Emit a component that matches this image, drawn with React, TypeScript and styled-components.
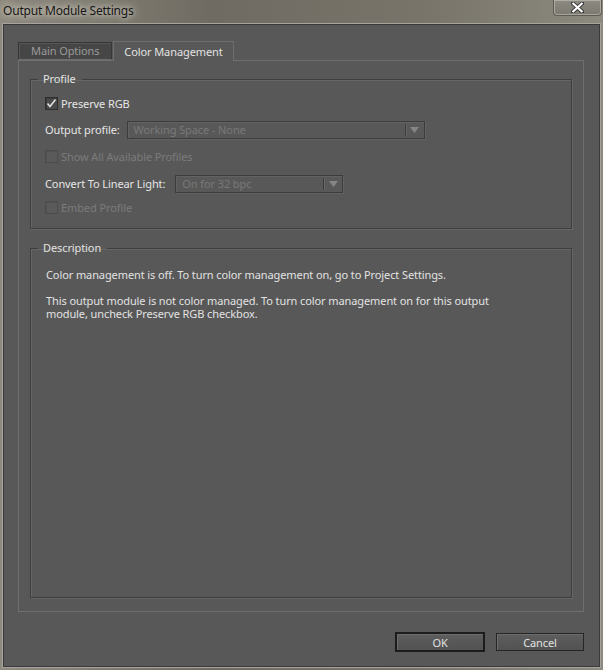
import React from 'react'
import styled, { createGlobalStyle } from 'styled-components'

const GlobalStyle = createGlobalStyle`
    html, body {
        margin: 0;
        padding: 0;
        background: #7a766c;
    }
    * {
        box-sizing: border-box;
    }
`

const UI_FONT = `"Noto Sans", "Open Sans", "Liberation Sans", sans-serif`

const Window = styled.div`
    width: 603px;
    height: 670px;
    display: flex;
    flex-direction: column;
    background: linear-gradient(90deg, #8f8a7e 0%, #6f6b62 35%, #78746a 70%, #8c897f 100%);
    font-family: ${UI_FONT};
    font-size: 11px;
    letter-spacing: -0.1px;
`

const TitleBar = styled.div`
    height: 23px;
    display: flex;
    justify-content: space-between;
    align-items: flex-start;
    flex-shrink: 0;
`

const Title = styled.div`
    padding: 2px 0 0 3px;
    font-size: 12px;
    letter-spacing: -0.2px;
    color: #161616;
    text-shadow: 0 0 6px rgba(235, 232, 220, 0.9), 0 0 10px rgba(235, 232, 220, 0.7);
`

const CloseButton = styled.div`
    width: 49px;
    height: 16px;
    margin-right: 1px;
    border: 1px solid #5e5b54;
    border-top: none;
    border-radius: 0 0 4px 4px;
    box-shadow: inset 0 0 0 1px rgba(220, 218, 210, 0.45);
    background: linear-gradient(180deg, #8d8a81, #7c7970);
    display: flex;
    align-items: center;
    justify-content: center;
`

const Body = styled.div`
    flex: 1;
    margin: 0 2px 2px 2px;
    border: 1px solid #a6a49e;
    box-shadow: inset 0 0 0 1px #3a3a3a;
    background: #585858;
    display: flex;
    flex-direction: column;
    padding: 17px 16px 15px 15px;
`

const TabRow = styled.div`
    display: flex;
    align-items: flex-end;
    height: 19px;
`

const Tab = styled.div<{ $active?: boolean }>`
    height: ${({ $active }) => ($active ? '20px' : '18px')};
    margin-bottom: ${({ $active }) => ($active ? '-1px' : '0')};
    padding: 0 ${({ $active }) => ($active ? '10px' : '12px')} 1px;
    margin-left: ${({ $active }) => ($active ? '1px' : '0')};
    display: flex;
    align-items: center;
    color: ${({ $active }) => ($active ? '#e2e2e2' : '#9a9a9a')};
    background: ${({ $active }) => ($active ? '#585858' : '#464646')};
    border: 1px solid ${({ $active }) => ($active ? '#6e6e6e' : '#363636')};
    border-bottom: ${({ $active }) => ($active ? 'none' : '1px solid #6e6e6e')};
    box-shadow: ${({ $active }) =>
        $active ? 'none' : 'inset 1px 1px 0 #565656'};
    position: relative;
    z-index: ${({ $active }) => ($active ? 1 : 0)};
`

const TabPanel = styled.div`
    flex: 1;
    border: 1px solid #6e6e6e;
    padding: 11px 11px 13px 11px;
    display: flex;
    flex-direction: column;
    gap: 12px;
`

const Group = styled.fieldset<{ $grow?: boolean }>`
    margin: 0;
    padding: 0 14px;
    border: 1px solid #3e3e3e;
    box-shadow: inset 1px 1px 0 #666666, 1px 1px 0 #666666;
    min-width: 0;
    flex: ${({ $grow }) => ($grow ? 1 : 'none')};
    height: ${({ $grow }) => ($grow ? 'auto' : '157px')};
`

const Legend = styled.legend`
    padding: 0 6px 0 5px;
    margin-left: -7px;
    color: #e2e2e2;
    font-size: 11px;
    line-height: 14px;
`

const Rows = styled.div`
    display: flex;
    flex-direction: column;
    padding-top: 5px;
`

const Row = styled.div<{ $h: number }>`
    height: ${({ $h }) => $h}px;
    display: flex;
    align-items: center;
`

const CheckBox = styled.div<{ $disabled?: boolean }>`
    width: 13px;
    height: 13px;
    flex-shrink: 0;
    border: 1px solid ${({ $disabled }) => ($disabled ? '#4c4c4c' : '#2e2e2e')};
    background: ${({ $disabled }) => ($disabled ? '#5a5a5a' : '#4a4a4a')};
    box-shadow: inset 1px 1px 0 ${({ $disabled }) => ($disabled ? '#525252' : '#3c3c3c')};
    display: flex;
    align-items: center;
    justify-content: center;
    margin-right: 3px;
`

const Label = styled.span<{ $disabled?: boolean }>`
    color: ${({ $disabled }) => ($disabled ? '#7b7b7b' : '#e6e6e6')};
    white-space: nowrap;
`

const Select = styled.div<{ $width: number; $gap: number }>`
    width: ${({ $width }) => $width}px;
    height: 18px;
    margin-left: ${({ $gap }) => $gap}px;
    border: 1px solid #3c3c3c;
    box-shadow: inset 1px 1px 0 #626262, 1px 1px 0 #626262;
    display: flex;
    align-items: center;
    color: #787878;
`

const SelectText = styled.span`
    flex: 1;
    padding-left: 6px;
    white-space: nowrap;
`

const SelectArrow = styled.div`
    width: 19px;
    display: flex;
    align-items: center;
    justify-content: center;
    border-left: 1px solid #3c3c3c;
    box-shadow: inset 1px 0 0 #666666;
    margin: 2px 0;
    height: 12px;
`

const Description = styled.div`
    padding: 13px 0 0 1px;
    color: #e2e2e2;
    line-height: 13px;
    display: flex;
    flex-direction: column;
    gap: 13px;
`

const Para = styled.p`
    margin: 0;
    max-width: 470px;
`

const Footer = styled.div`
    display: flex;
    justify-content: flex-end;
    gap: 11px;
    padding-top: 20px;
`

const Button = styled.div<{ $default?: boolean }>`
    width: ${({ $default }) => ($default ? '90px' : '88px')};
    height: ${({ $default }) => ($default ? '20px' : '18px')};
    margin-top: ${({ $default }) => ($default ? '0' : '1px')};
    border: ${({ $default }) => ($default ? '2px solid #1c1c1c' : '1px solid #262626')};
    background: linear-gradient(180deg, #5e5e5e, #525252);
    box-shadow: inset 1px 1px 0 #6c6c6c;
    color: #e2e2e2;
    font-size: 11px;
    display: flex;
    align-items: center;
    justify-content: center;
`

const CheckMark = () => (
    <svg width="11" height="11" viewBox="0 0 11 11">
        <path d="M1.5 5.5 L4 8.5 L9.5 1.5" fill="none" stroke="#e0e0e0" strokeWidth="1.6" />
    </svg>
)

const DownArrow = () => (
    <svg width="9" height="6" viewBox="0 0 9 6">
        <path d="M0 0 H9 L4.5 6 Z" fill="#858585" />
    </svg>
)

const CloseGlyph = () => (
    <svg width="13" height="11" viewBox="0 0 13 11">
        <path
            d="M1.5 1 L11.5 10 M11.5 1 L1.5 10"
            stroke="#3a3a3a"
            strokeWidth="4"
            strokeLinecap="round"
        />
        <path d="M1.5 1 L11.5 10 M11.5 1 L1.5 10" stroke="#ffffff" strokeWidth="2.2" />
    </svg>
)

const App = () => (
    <>
        <GlobalStyle />
        <Window>
            <TitleBar>
                <Title>Output Module Settings</Title>
                <CloseButton>
                    <CloseGlyph />
                </CloseButton>
            </TitleBar>
            <Body>
                <TabRow>
                    <Tab>Main Options</Tab>
                    <Tab $active>Color Management</Tab>
                </TabRow>
                <TabPanel>
                    <Group>
                        <Legend>Profile</Legend>
                        <Rows>
                            <Row $h={25}>
                                <CheckBox>
                                    <CheckMark />
                                </CheckBox>
                                <Label>Preserve RGB</Label>
                            </Row>
                            <Row $h={27}>
                                <Label>Output profile:</Label>
                                <Select $width={298} $gap={7}>
                                    <SelectText>Working Space - None</SelectText>
                                    <SelectArrow>
                                        <DownArrow />
                                    </SelectArrow>
                                </Select>
                            </Row>
                            <Row $h={27}>
                                <CheckBox $disabled />
                                <Label $disabled>Show All Available Profiles</Label>
                            </Row>
                            <Row $h={27}>
                                <Label>Convert To Linear Light:</Label>
                                <Select $width={168} $gap={10}>
                                    <SelectText>On for 32 bpc</SelectText>
                                    <SelectArrow>
                                        <DownArrow />
                                    </SelectArrow>
                                </Select>
                            </Row>
                            <Row $h={21}>
                                <CheckBox $disabled />
                                <Label $disabled>Embed Profile</Label>
                            </Row>
                        </Rows>
                    </Group>
                    <Group $grow>
                        <Legend>Description</Legend>
                        <Description>
                            <Para>
                                Color management is off. To turn color management on, go to
                                Project Settings.
                            </Para>
                            <Para>
                                This output module is not color managed. To turn color
                                management on for this output module, uncheck Preserve RGB
                                checkbox.
                            </Para>
                        </Description>
                    </Group>
                </TabPanel>
                <Footer>
                    <Button $default>OK</Button>
                    <Button>Cancel</Button>
                </Footer>
            </Body>
        </Window>
    </>
)

export default App
